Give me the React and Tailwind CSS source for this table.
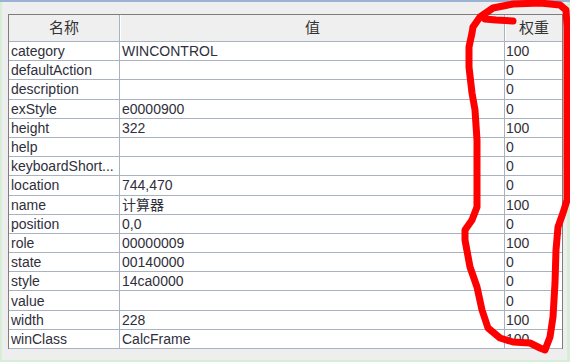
const rows = [
  ['category', 'WINCONTROL', '100'],
  ['defaultAction', '', '0'],
  ['description', '', '0'],
  ['exStyle', 'e0000900', '0'],
  ['height', '322', '100'],
  ['help', '', '0'],
  ['keyboardShort...', '', '0'],
  ['location', '744,470', '0'],
  ['name', '计算器', '100'],
  ['position', '0,0', '0'],
  ['role', '00000009', '100'],
  ['state', '00140000', '0'],
  ['style', '14ca0000', '0'],
  ['value', '', '0'],
  ['width', '228', '100'],
  ['winClass', 'CalcFrame', '100'],
]

const font = { fontFamily: '"Liberation Sans", "Noto Sans CJK SC", Arial, sans-serif' }

// hand-drawn red loop around the weight column
const loop = [
  [473, 27], [480, 17], [493, 8], [513, 4], [540, 3], [560, 5], [566, 10], [567, 27],
  [567, 100], [567, 200], [563, 213], [558, 227], [556, 250], [555, 283], [553, 317],
  [550, 337], [545, 350], [540, 348], [530, 343], [513, 342], [500, 338], [488, 328],
  [482, 310], [477, 287], [470, 267], [465, 240], [465, 230], [472, 220], [477, 207],
  [477, 167], [477, 140], [475, 110], [472, 93], [469, 67], [469, 47], [472, 33], [473, 27],
]

export default function App() {
  const d = 'M' + loop.map(([x, y]) => `${x} ${y}`).join(' L')

  return (
    <div className="relative w-[570px] h-[362px] bg-[#d6eed6] flex flex-col overflow-hidden" style={font}>
      <div className="h-[2px] bg-[#9cb2d2] shrink-0" />
      <div className="flex-1 ml-[2px] mr-[3px] mb-[2px] bg-[#eeeeee] pt-[12px] pl-[6px]">
        <div className="w-[555px] border-l border-t border-r border-[#7d7d7d] bg-white text-[14px] text-[#2f2f3c]">
          {/* header */}
          <div className="grid grid-cols-[111px_385px_57px] h-[27px] bg-[#efefef] border-b border-[#a9b2c0] text-[15px] text-[#333]">
            <div className="flex items-center justify-center border-r border-[#a9b2c0]">名称</div>
            <div className="flex items-center justify-center border-r border-[#a9b2c0] border-l border-l-white">值</div>
            <div className="flex items-center justify-center border-l border-l-white">权重</div>
          </div>
          {rows.map(([name, value, weight]) => (
            <div key={name} className="grid grid-cols-[111px_385px_57px] h-[19.2px] border-b border-[#a9b2c0] leading-none">
              <div className="flex items-center pl-[2px] border-r border-[#a9b2c0] whitespace-nowrap overflow-hidden">{name}</div>
              <div className="flex items-center pl-[2px] border-r border-[#a9b2c0] whitespace-nowrap">{value}</div>
              <div className="flex items-center pl-[1px]">{weight}</div>
            </div>
          ))}
        </div>
      </div>

      <svg className="absolute inset-0 pointer-events-none" width="570" height="362" viewBox="0 0 570 362">
        <g fill="none" stroke="#ff0000" strokeWidth="7" strokeLinecap="round" strokeLinejoin="round">
          <path d={d} />
          <path d="M513 21 L496 20 L485 19" />
        </g>
      </svg>
    </div>
  )
}
